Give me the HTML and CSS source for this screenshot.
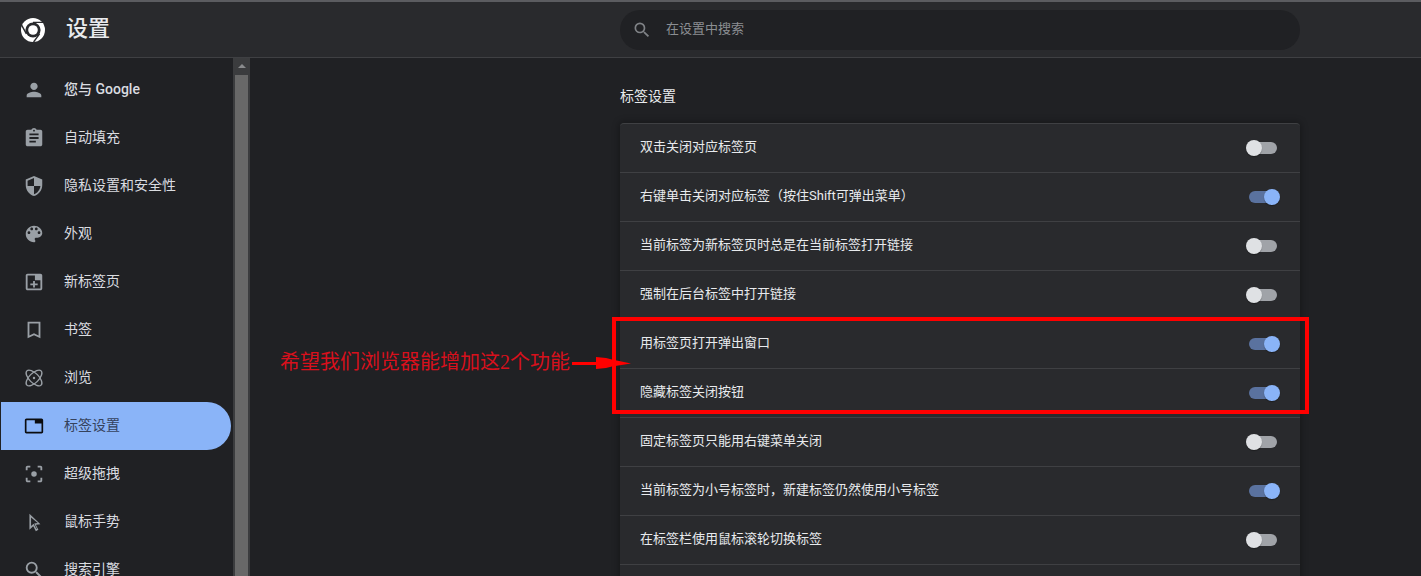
FILE: index.html
```html
<!DOCTYPE html>
<html lang="zh-CN">
<head>
<meta charset="utf-8">
<title>设置</title>
<link rel="stylesheet" href="styles.css">
</head>
<body>
<header class="topbar">
  <div class="brand">
    <svg class="logo" viewBox="0 0 24 24"><circle cx="12" cy="12" r="12" fill="#fff"/><circle cx="12" cy="12" r="7.600" fill="#292a2d"/><circle cx="12" cy="12" r="4.800" fill="#fff"/><path d="M12 4.400h10.800M5.400 15.800L.2 6.300M18.600 15.800l-6 8.200" stroke="#292a2d" stroke-width="1.400" fill="none"/></svg>
    <h1 class="title">设置</h1>
  </div>
  <div class="search">
    <svg class="search-icon" viewBox="0 0 24 24"><path d="M15.5 14h-.79l-.28-.27A6.47 6.47 0 0 0 16 9.5 6.5 6.5 0 1 0 9.5 16c1.61 0 3.09-.59 4.23-1.57l.27.28v.79l5 4.99L20.49 19l-4.99-5zm-6 0C7.01 14 5 11.99 5 9.5S7.01 5 9.5 5 14 7.01 14 9.5 11.99 14 9.5 14z"/></svg>
    <span class="search-text">在设置中搜索</span>
  </div>
</header>
<div class="main">
  <nav class="sidebar">
    <a class="nav-item"><svg class="nav-icon" viewBox="0 0 24 24"><path d="M12 12c2.21 0 4-1.79 4-4s-1.79-4-4-4-4 1.79-4 4 1.79 4 4 4zm0 2c-2.67 0-8 1.34-8 4v2h16v-2c0-2.66-5.33-4-8-4z"/></svg><span class="nav-strong">您与 Google</span></a>
    <a class="nav-item"><svg class="nav-icon" viewBox="0 0 24 24"><path d="M19 3h-4.18C14.4 1.84 13.3 1 12 1c-1.3 0-2.4.84-2.82 2H5c-1.1 0-2 .9-2 2v14c0 1.1.9 2 2 2h14c1.1 0 2-.9 2-2V5c0-1.1-.9-2-2-2zm-7 0c.55 0 1 .45 1 1s-.45 1-1 1-1-.45-1-1 .45-1 1-1zm2 14H7v-2h7v2zm3-4H7v-2h10v2zm0-4H7V7h10v2z"/></svg><span>自动填充</span></a>
    <a class="nav-item"><svg class="nav-icon" viewBox="0 0 24 24"><path d="M12 1L3 5v6c0 5.55 3.84 10.74 9 12 5.16-1.26 9-6.45 9-12V5l-9-4zm0 10.99h7c-.53 4.12-3.28 7.79-7 8.94V12H5V6.3l7-3.11v8.8z"/></svg><span>隐私设置和安全性</span></a>
    <a class="nav-item"><svg class="nav-icon" viewBox="0 0 24 24"><path d="M12 3c-4.97 0-9 4.03-9 9s4.03 9 9 9c.83 0 1.5-.67 1.5-1.5 0-.39-.15-.74-.39-1.01-.23-.26-.38-.61-.38-.99 0-.83.67-1.5 1.5-1.5H16c2.76 0 5-2.24 5-5 0-4.42-4.03-8-9-8zm-5.5 9c-.83 0-1.5-.67-1.5-1.5S5.67 9 6.5 9 8 9.67 8 10.5 7.33 12 6.5 12zm3-4C8.67 8 8 7.33 8 6.5S8.67 5 9.5 5s1.5.67 1.5 1.5S10.33 8 9.5 8zm5 0c-.83 0-1.5-.67-1.5-1.5S13.67 5 14.5 5s1.5.67 1.5 1.500S15.330 8 14.500 8zm3 4c-.83 0-1.5-.67-1.5-1.5S16.67 9 17.5 9s1.5.67 1.5 1.5-.67 1.5-1.5 1.5z"/></svg><span>外观</span></a>
    <a class="nav-item"><svg class="nav-icon" viewBox="0 0 24 24"><path fill-rule="evenodd" d="M5 3h14c1.100 0 2 .9 2 2v14c0 1.100-.9 2-2 2H5c-1.100 0-2-.9-2-2V5c0-1.100.9-2 2-2zm0 2v14h14V10h-6V5H5zm6 6h2v2.500h3v2h-3V18h-2v-2.500H8v-2h3V11z"/></svg><span>新标签页</span></a>
    <a class="nav-item"><svg class="nav-icon" viewBox="0 0 24 24"><path fill-rule="evenodd" d="M5 3h14v18l-7-3.200L5 21V3zm2 2v12.900l5-2.300 5 2.300V5H7z"/></svg><span>书签</span></a>
    <a class="nav-item"><svg class="nav-icon" viewBox="0 0 24 24"><g class="atom"><ellipse cx="12" cy="12" rx="11" ry="5.200" transform="rotate(45 12 12)"/><ellipse cx="12" cy="12" rx="11" ry="5.200" transform="rotate(-45 12 12)"/></g><circle cx="12" cy="12" r="1.300"/></svg><span>浏览</span></a>
    <a class="nav-item nav-active"><svg class="nav-icon" viewBox="0 0 24 24"><path d="M21 3H3c-1.100 0-2 .9-2 2v14c0 1.100.9 2 2 2h18c1.100 0 2-.9 2-2V5c0-1.100-.9-2-2-2zm0 16H3V5h10v4h8v10z"/></svg><span>标签设置</span></a>
    <a class="nav-item"><svg class="nav-icon" viewBox="0 0 24 24"><path d="M3 8V5c0-1.100.9-2 2-2h3v2H5v3H3zm13-5h3c1.100 0 2 .9 2 2v3h-2V5h-3V3zM3 16h2v3h3v2H5c-1.100 0-2-.9-2-2v-3zm16 0h2v3c0 1.100-.9 2-2 2h-3v-2h3v-3z"/><circle cx="12" cy="12" r="3"/></svg><span>超级拖拽</span></a>
    <a class="nav-item"><svg class="nav-icon" viewBox="0 0 24 24"><path fill-rule="evenodd" d="M7 3l12 11.500-5 .6 2.800 5.400-2.800 1.600-2.800-5.500L7 20.500V3zm1.800 4.200v9.100l2.800-2.500 3 5.900.6-.3-3-5.900 3.900-.5L8.800 7.200z"/></svg><span>鼠标手势</span></a>
    <a class="nav-item"><svg class="nav-icon" viewBox="0 0 24 24"><path d="M15.500 14h-.79l-.28-.27A6.470 6.470 0 0 0 16 9.500 6.500 6.500 0 1 0 9.500 16c1.610 0 3.090-.59 4.230-1.570l.27.28v.79l5 4.990L20.490 19l-4.990-5zm-6 0C7.010 14 5 11.990 5 9.500S7.010 5 9.500 5 14 7.010 14 9.500 11.990 14 9.500 14z"/></svg><span>搜索引擎</span></a>
  </nav>
  <div class="scrollbar">
    <div class="scroll-btn"><span class="scroll-arrow"></span></div>
    <div class="scroll-thumb"></div>
  </div>
  <main class="content">
    <h2 class="section-title">标签设置</h2>
    <section class="card">
      <div class="row"><span class="row-label">双击关闭对应标签页</span><span class="toggle"></span></div>
      <div class="row"><span class="row-label">右键单击关闭对应标签（按住Shift可弹出菜单）</span><span class="toggle on"></span></div>
      <div class="row"><span class="row-label">当前标签为新标签页时总是在当前标签打开链接</span><span class="toggle"></span></div>
      <div class="row"><span class="row-label">强制在后台标签中打开链接</span><span class="toggle"></span></div>
      <div class="row"><span class="row-label">用标签页打开弹出窗口</span><span class="toggle on"></span></div>
      <div class="row"><span class="row-label">隐藏标签关闭按钮</span><span class="toggle on"></span></div>
      <div class="row"><span class="row-label">固定标签页只能用右键菜单关闭</span><span class="toggle"></span></div>
      <div class="row"><span class="row-label">当前标签为小号标签时，新建标签仍然使用小号标签</span><span class="toggle on"></span></div>
      <div class="row"><span class="row-label">在标签栏使用鼠标滚轮切换标签</span><span class="toggle"></span></div>
      <div class="row"></div>
    </section>
  </main>
</div>
<div class="note-box"></div>
<div class="note-text">希望我们浏览器能增加这2个功能</div>
<svg class="note-arrow" viewBox="0 0 60 14"><path d="M0 6h24V1l10 1 6 1.500L59 7.500 40 10.500 34 12l-10 1V9H0z"/></svg>
</body>
</html>
```
FILE: styles.css
```css
* { box-sizing: border-box; }
html, body { margin: 0; height: 576px; overflow: hidden; }
body {
  background: #202124;
  color: #e8eaed;
  font-family: "Roboto", "Noto Sans CJK SC", sans-serif;
  font-size: 13px;
}
.topbar {
  height: 58px;
  display: flex;
  align-items: center;
  background: #292a2d;
  border-top: 2px solid #5b5c60;
  border-bottom: 1px solid #3f4043;
}
.brand { width: 620px; display: flex; align-items: center; padding-left: 21px; }
.logo { width: 24px; height: 24px; margin-right: 21px; }
.title { margin: 0 0 2px; font-size: 22px; font-weight: 500; line-height: 30px; color: #e8eaed; }
.search {
  width: 680px;
  height: 40px;
  display: flex;
  align-items: center;
  padding-left: 12px;
  border-radius: 20px;
  background: #202124;
}
.search-icon { width: 20px; height: 20px; fill: #7f8286; margin-right: 14px; }
.search-text { color: #8b8e92; font-size: 13px; margin-bottom: 4px; }
.main { display: flex; height: 518px; overflow: hidden; }
.sidebar {
  width: 233px;
  flex: none;
  padding-top: 8px;
  overflow: hidden;
}
.nav-item {
  height: 48px;
  margin-left: 1px;
  width: 230px;
  display: flex;
  align-items: center;
  padding-left: 22px;
  font-size: 14px;
  color: #dadce0;
  border-radius: 0 24px 24px 0;
}
.nav-item span { margin-bottom: 4px; }
.nav-strong { font-weight: 500; }
.nav-icon { width: 22px; height: 22px; fill: #9aa0a6; margin-right: 19px; flex: none; }
.atom { fill: none; stroke: #9aa0a6; stroke-width: 1.500; }
.nav-active { background: #8ab4f8; color: #35425c; }
.nav-active .nav-icon { width: 20px; height: 20px; margin: 0 20px 0 1px; fill: #0b0c0f; }
.scrollbar {
  width: 17px;
  flex: none;
  background: #3b3c3e;
  padding: 0 2px;
  display: flex;
  flex-direction: column;
}
.scroll-btn { height: 17px; display: flex; justify-content: center; padding-top: 6px; }
.scroll-arrow {
  width: 0;
  height: 0;
  border-left: 4px solid transparent;
  border-right: 4px solid transparent;
  border-bottom: 4px solid #8a8b8d;
}
.scroll-thumb { flex: 1; background: #686868; }
.content { flex: 1; padding: 30px 0 0 370px; }
.section-title {
  margin: 0 0 19px;
  font-size: 14px;
  font-weight: 400;
  line-height: 16px;
  color: #e8eaed;
}
.card {
  width: 680px;
  background: #292a2d;
  border-top: 1px solid #3f4043;
  border-radius: 4px 4px 0 0;
  box-shadow: 0 0 6px 2px rgba(0, 0, 0, 0.25);
}
.row {
  height: 49px;
  display: flex;
  align-items: center;
  justify-content: space-between;
  padding: 0 20px 0 20px;
  border-bottom: 1px solid #3f4043;
  font-size: 13px;
  color: #e8eaed;
}
.row-label { margin-bottom: 5px; }
.toggle {
  position: relative;
  width: 28px;
  height: 12px;
  margin-right: 3px;
  margin-left: auto;
  border-radius: 6px;
  background: #a0a3a8;
}
.toggle::after {
  content: "";
  position: absolute;
  left: -3px;
  top: -2px;
  width: 16px;
  height: 16px;
  border-radius: 50%;
  background: #dfe1e4;
  box-shadow: 0 1px 1px rgba(0, 0, 0, 0.3);
}
.toggle.on { background: #5a729f; }
.toggle.on::after { left: 15px; background: #8ab4f8; }
.note-box {
  position: absolute;
  left: 612px;
  top: 317px;
  width: 697px;
  height: 97px;
  border: 4px solid #ff0000;
}
.note-text {
  position: absolute;
  left: 280px;
  top: 349px;
  font-family: "Liberation Serif", "Noto Sans CJK SC", serif;
  font-size: 20px;
  line-height: 26px;
  color: #d8101c;
  white-space: nowrap;
}
.note-arrow {
  position: absolute;
  left: 572px;
  top: 356px;
  width: 60px;
  height: 14px;
  fill: #ff0000;
}
```
